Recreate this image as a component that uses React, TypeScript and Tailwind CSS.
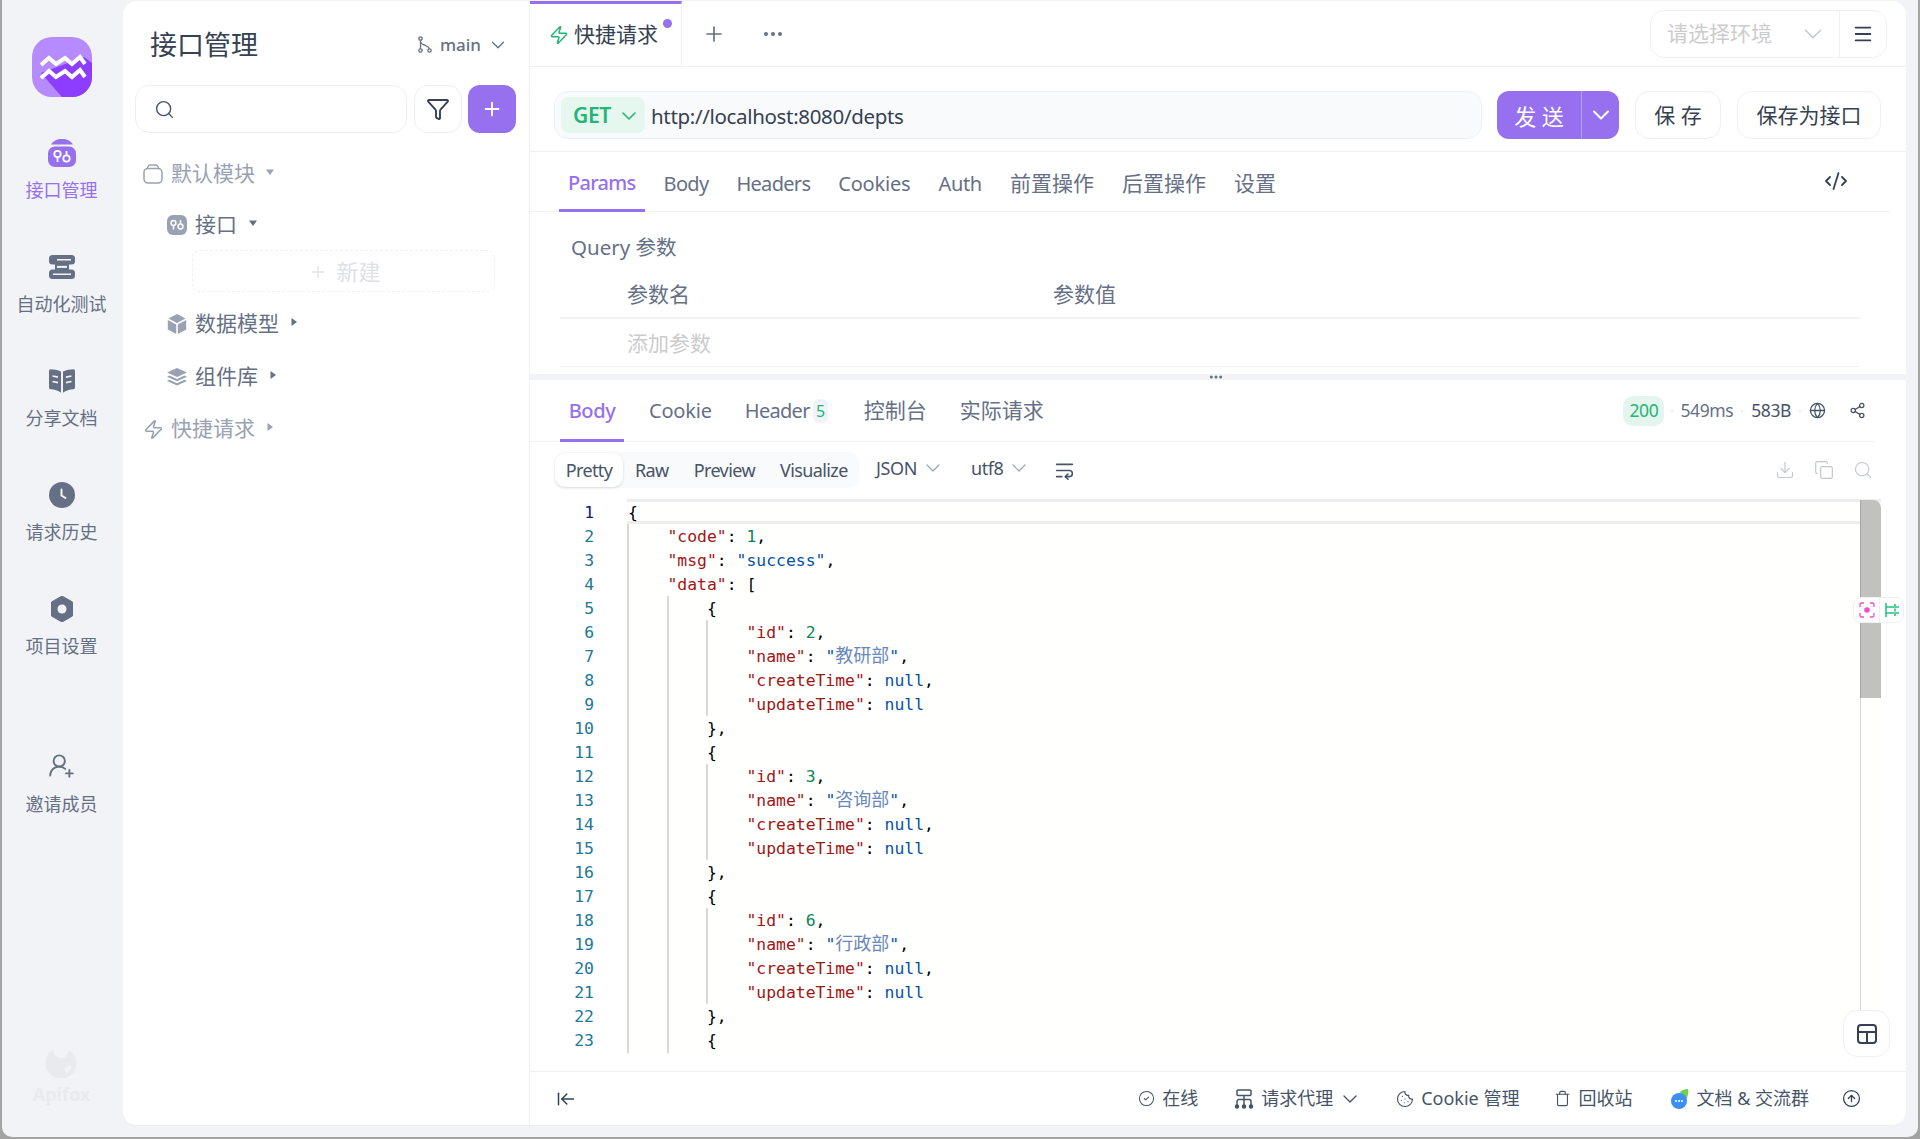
import React from 'react';
import {
  ArrowLeftToLine,
  ChevronDown,
  CircleArrowUp,
  CircleCheck,
  CodeXml,
  Copy,
  Cookie,
  Download,
  Ellipsis,
  Funnel,
  Globe,
  Menu,
  Plus,
  Search,
  Share2,
  Trash,
  UserRoundPlus,
  WrapText,
  Zap,
} from 'lucide-react';

const LogoMark = () => (
  <svg width="60" height="60" viewBox="0 0 60 60">
    <defs>
      <clipPath id="logoClip">
        <rect width="60" height="60" rx="20" />
      </clipPath>
    </defs>
    <g clipPath="url(#logoClip)">
      <rect width="60" height="60" fill="#b58bff" />
      <polygon points="9,36 52,20 60,26 60,60 30,60" fill="#8c3dff" />
    </g>
    <path d="M9 28l8-7 7 6 9-6 7 6 8-7 5 7" fill="none" stroke="#fff" strokeWidth="4" />
    <path d="M9 41l8-7 7 6 9-6 7 6 8-7 5 7" fill="none" stroke="#fff" strokeWidth="4" />
  </svg>
);

const ApiNavIcon = () => (
  <svg width="28" height="28" viewBox="0 0 28 28">
    <path d="M3 5.500C5 2 9 0 14 0s9 2 11 5.500z" fill="#9670ee" />
    <rect y="7.500" width="28" height="20.500" rx="7" fill="#9670ee" />
    <circle cx="9.500" cy="15" r="3.200" fill="none" stroke="#fff" strokeWidth="1.800" />
    <path d="M9.500 18v5M18.500 12v5" stroke="#fff" strokeWidth="1.800" />
    <circle cx="18.500" cy="19.500" r="3.200" fill="none" stroke="#fff" strokeWidth="1.800" />
  </svg>
);

const ServersIcon = () => (
  <svg width="26" height="24" viewBox="0 0 26 24">
    <rect width="26" height="9.500" rx="3.500" fill="#667085" />
    <rect y="14.500" width="26" height="9.500" rx="3.500" fill="#667085" />
    <rect x="6" y="8" width="14" height="8" fill="#667085" />
    <path d="M8 4.700h14M4 19.200h18" stroke="#f2f3f7" strokeWidth="1.600" />
    <path d="M8 11.900h10" stroke="#f2f3f7" strokeWidth="2" />
  </svg>
);

const BookIcon = () => (
  <svg width="26" height="24" viewBox="0 0 26 24">
    <path d="M12 2.500C9 1 4 .2 1.800.2 .7.2 0 1 0 2v16.500c0 1 .7 1.700 1.700 1.800 3.500.3 7.500 1.300 10.300 3.500z" fill="#667085" />
    <path d="M14 2.500C17 1 22 .2 24.200.2c1.100 0 1.800.8 1.800 1.800v16.500c0 1-.7 1.700-1.700 1.800-3.500.3-7.500 1.300-10.300 3.500z" fill="#667085" />
    <path d="M3.500 7l5.500 1.200M3.500 12.500L9 13.700M17 8.200L22.500 7M17 13.700l5.500-1.200" stroke="#f2f3f7" strokeWidth="1.700" />
  </svg>
);

const ClockIcon = () => (
  <svg width="26" height="26" viewBox="0 0 26 26">
    <circle cx="13" cy="13" r="13" fill="#667085" />
    <path d="M12.500 7.500v6l4 2.500" fill="none" stroke="#f2f3f7" strokeWidth="2" strokeLinecap="round" />
  </svg>
);

const HexIcon = () => (
  <svg width="24" height="26" viewBox="0 0 24 26">
    <path d="M12 0l10.500 6v14L12 26 1.500 20V6z" fill="#667085" stroke="#667085" strokeLinejoin="round" strokeWidth="1" />
    <circle cx="12" cy="13" r="4.500" fill="#f2f3f7" />
  </svg>
);

const ApifoxMark = () => (
  <svg width="32" height="30" viewBox="0 0 32 30">
    <circle cx="16" cy="15" r="15.500" fill="#e9eaee" />
    <path d="M8 0c0 6 3.500 10 8 10s8-4 8-10z" fill="#f2f3f7" />
    <path d="M22 25c-2-1-3-3-2-5 2 0 3-1 4-3 1 1 2 1 3 1-1 3-3 6-5 7z" fill="#f2f3f7" />
  </svg>
);

const TreeApiIcon = () => (
  <svg width="20" height="20" viewBox="0 0 20 20">
    <rect width="20" height="20" rx="6" fill="#98a2b3" />
    <circle cx="6.500" cy="8" r="2.400" fill="none" stroke="#fff" strokeWidth="1.500" />
    <path d="M6.500 10.500v4M13.500 5v4" stroke="#fff" strokeWidth="1.500" />
    <circle cx="13.500" cy="11.500" r="2.400" fill="none" stroke="#fff" strokeWidth="1.500" />
  </svg>
);

const FolderCan = () => (
  <svg width="20" height="20" viewBox="0 0 20 20" fill="none" stroke="#98a2b3" strokeWidth="1.500">
    <path d="M1 8.500C1 6 3 4.500 5 4.500h10c2 0 4 1.500 4 4V15c0 2.500-2 4-4 4H5c-2 0-4-1.500-4-4z" />
    <path d="M4.500 4.500C4.500 2.500 6 1 7.500 1h5c1.500 0 3 1.500 3 3.500" />
  </svg>
);

const CubeIcon = () => (
  <svg width="20" height="20" viewBox="0 0 20 20" fill="#98a2b3">
    <path d="M10 0l8.500 4.500L10 9 1.500 4.500z" />
    <path d="M.8 6l8.400 4.500V20L.8 15.500zM19.200 6l-8.400 4.500V20l8.400-4.500z" />
  </svg>
);

const LayersIcon = () => (
  <svg width="20" height="18" viewBox="0 0 20 18" fill="#98a2b3">
    <path d="M10 0l10 4.500L10 9 0 4.500z" />
    <path d="M2.500 7.500L10 11l7.500-3.500L20 8.700 10 13.300 0 8.700z" />
    <path d="M2.500 11.700L10 15.200l7.500-3.500L20 13 10 17.600 0 13z" />
  </svg>
);

const BranchIcon = () => (
  <svg width="14" height="17" viewBox="0 0 14 17" fill="none" stroke="#667085" strokeWidth="1.300">
    <circle cx="2.500" cy="2.500" r="1.700" />
    <circle cx="2.500" cy="14.500" r="1.700" />
    <circle cx="11.500" cy="14.500" r="1.700" />
    <path d="M2.500 4.200v8.600M2.500 6c1 2.500 3 2.500 5 3.500 2 1 3.500 2 4 3.300" />
  </svg>
);

const Caret = ({ open, color = '#667085' }: { open?: boolean; color?: string }) => (
  <svg width="8" height="8" viewBox="0 0 8 8" fill={color}>
    {open ? <path d="M0 1.500h8L4 7z" /> : <path d="M1.500 0v8L7 4z" />}
  </svg>
);

const ProxyIcon = () => (
  <svg width="20" height="20" viewBox="0 0 20 20" fill="none" stroke="#475467" strokeWidth="1.500">
    <rect x="3" y="1" width="14" height="5.500" rx="1" />
    <path d="M10 6.500V16M3 16v-3.500a2 2 0 012-2h10a2 2 0 012 2V16" />
    <circle cx="3" cy="17.500" r="1.500" fill="#475467" />
    <circle cx="10" cy="17.500" r="1.500" fill="#475467" />
    <circle cx="17" cy="17.500" r="1.500" fill="#475467" />
  </svg>
);

const ChatIcon = () => (
  <svg width="18" height="20" viewBox="0 0 18 20">
    <path d="M9 3c2-2 5-3 8-3 1 5-1 10-4 13z" fill="#6fd14b" />
    <circle cx="8" cy="12" r="8" fill="#3e8ef7" />
    <circle cx="5" cy="12" r="1" fill="#fff" />
    <circle cx="8" cy="12" r="1" fill="#fff" />
    <circle cx="11" cy="12" r="1" fill="#fff" />
  </svg>
);

const LayoutIcon = () => (
  <svg width="20" height="20" viewBox="0 0 20 20" fill="none" stroke="#344054" strokeWidth="2">
    <rect x="1" y="1" width="18" height="18" rx="3" />
    <path d="M1 8h18M10 8v11" />
  </svg>
);

const ScanIcon = () => (
  <svg width="16" height="16" viewBox="0 0 16 16" fill="none" stroke="#ee4fc8" strokeWidth="1.300">
    <path d="M1 5V2.500A1.500 1.500 0 012.500 1H5M11 1h2.500A1.500 1.500 0 0115 2.500V5M15 11v2.500a1.500 1.500 0 01-1.500 1.500H11M5 15H2.500A1.500 1.500 0 011 13.500V11" />
    <circle cx="8" cy="8" r="2.800" fill="#ee4fc8" stroke="none" />
  </svg>
);

const BarsIcon = () => (
  <svg width="14" height="16" viewBox="0 0 14 16" fill="none" stroke="#27c281" strokeWidth="1.600">
    <path d="M1 1v14M1 5h13M1 11h13M10 2v2M10 6.500v3M10 12v2" />
  </svg>
);

const NavItem = ({ icon, label, active }: { icon: React.ReactNode; label: string; active?: boolean }) => (
  <div className="flex flex-col items-center">
    <div className="flex h-[28px] items-center justify-center">{icon}</div>
    <div className={`mt-[11px] text-[18px] leading-[24px] ${active ? 'text-[#9670ee]' : 'text-[#667085]'}`}>{label}</div>
  </div>
);

const Sidebar = () => (
  <aside className="flex h-full w-[121px] shrink-0 flex-col items-center pb-[22px] pr-[2px] pt-[36px]">
    <LogoMark />
    <div className="mt-[42px] flex flex-col items-center gap-[51px]">
      <NavItem icon={<ApiNavIcon />} label="接口管理" active />
      <NavItem icon={<ServersIcon />} label="自动化测试" />
      <NavItem icon={<BookIcon />} label="分享文档" />
      <NavItem icon={<ClockIcon />} label="请求历史" />
      <NavItem icon={<HexIcon />} label="项目设置" />
    </div>
    <div className="mt-[93px] flex flex-col items-center">
      <div className="flex h-[28px] items-center justify-center">
        <UserRoundPlus size={27} strokeWidth={1.7} color="#667085" />
      </div>
      <div className="mt-[13px] text-[18px] leading-[24px] text-[#667085]">邀请成员</div>
    </div>
    <div className="mt-auto flex flex-col items-center">
      <ApifoxMark />
      <div className="mt-[6px] text-[18px] font-bold leading-[20px] text-[#e9eaee]">Apifox</div>
    </div>
  </aside>
);

const TreePanel = () => (
  <div className="flex h-full w-[407px] shrink-0 flex-col border-r border-[#f0f1f4]">
    <div className="flex h-[84px] shrink-0 items-center pl-[27px] pr-[20px] pt-[3px]">
      <div className="text-[27px] leading-[36px] text-[#364152]">接口管理</div>
      <div className="ml-auto flex items-center text-[17px] font-medium text-[#667085]">
        <BranchIcon />
        <span className="ml-[8px]">main</span>
        <ChevronDown size={22} className="ml-[6px]" strokeWidth={1.4} />
      </div>
    </div>
    <div className="flex items-center pl-[12px]">
      <div className="flex h-[48px] w-[272px] items-center rounded-[14px] border border-[#eceef2] pl-[18px]">
        <Search size={21} strokeWidth={1.6} color="#475467" />
      </div>
      <div className="ml-[7px] flex h-[48px] w-[48px] items-center justify-center rounded-[14px] border border-[#eceef2]">
        <Funnel size={24} strokeWidth={1.9} color="#364152" />
      </div>
      <div className="ml-[6px] flex h-[48px] w-[48px] items-center justify-center rounded-[12px] bg-[#9670ee]">
        <Plus size={22} color="#fff" strokeWidth={2} />
      </div>
    </div>

    <div className="mt-[21px] flex h-[40px] items-center pl-[20px] text-[21px] text-[#98a2b3]">
      <FolderCan />
      <span className="ml-[8px]">默认模块</span>
      <span className="ml-[11px] pb-[4px]"><Caret open color="#98a2b3" /></span>
    </div>
    <div className="mt-[11px] flex h-[40px] items-center pl-[44px] text-[21px] text-[#667085]">
      <TreeApiIcon />
      <span className="ml-[8px]">接口</span>
      <span className="ml-[12px] pb-[4px]"><Caret open /></span>
    </div>
    <div className="ml-[69px] mt-[5px] flex h-[42px] w-[303px] items-center justify-center rounded-[8px] border border-dashed border-[#eef0f5] pl-[3px] pt-[1px] text-[22px] text-[#dfe1e6]">
      <Plus size={18} strokeWidth={1.8} />
      <span className="ml-[9px]">新建</span>
    </div>
    <div className="mt-[12px] flex h-[40px] items-center pl-[44px] text-[21px] text-[#667085]">
      <CubeIcon />
      <span className="ml-[8px]">数据模型</span>
      <span className="ml-[11px] pb-[4px]"><Caret /></span>
    </div>
    <div className="mt-[13px] flex h-[40px] items-center pl-[44px] text-[21px] text-[#667085]">
      <LayersIcon />
      <span className="ml-[8px]">组件库</span>
      <span className="ml-[11px] pb-[4px]"><Caret /></span>
    </div>
    <div className="mt-[12px] flex h-[40px] items-center pl-[20px] text-[21px] text-[#98a2b3]">
      <Zap size={21} strokeWidth={1.8} />
      <span className="ml-[7px]">快捷请求</span>
      <span className="ml-[11px] pb-[4px]"><Caret color="#98a2b3" /></span>
    </div>
  </div>
);

const CjkTabs = ['前置操作', '后置操作', '设置'];

const CODE_LINES = [
  '{',
  '    "code": 1,',
  '    "msg": "success",',
  '    "data": [',
  '        {',
  '            "id": 2,',
  '            "name": "教研部",',
  '            "createTime": null,',
  '            "updateTime": null',
  '        },',
  '        {',
  '            "id": 3,',
  '            "name": "咨询部",',
  '            "createTime": null,',
  '            "updateTime": null',
  '        },',
  '        {',
  '            "id": 6,',
  '            "name": "行政部",',
  '            "createTime": null,',
  '            "updateTime": null',
  '        },',
  '        {',
];

const renderString = (text: string) =>
  text.split(/([\u4e00-\u9fff]+)/).map((part, i) =>
    /[\u4e00-\u9fff]/.test(part) ? (
      <span key={i} className="text-[18px] leading-[0] text-[#6a88b8] [font-family:'Noto_Sans_CJK_SC',sans-serif]">
        {part}
      </span>
    ) : (
      part
    ),
  );

const renderLine = (line: string) => {
  const out: React.ReactNode[] = [];
  const re = /("[^"]*")(:?)|(\b\d+\b)|(null)/g;
  let last = 0;
  let m: RegExpExecArray | null;
  while ((m = re.exec(line))) {
    if (m.index > last) out.push(line.slice(last, m.index));
    if (m[1] && m[2]) {
      out.push(<span key={m.index} className="text-[#a31515]">{m[1]}</span>);
      out.push(m[2]);
    } else if (m[1]) {
      out.push(<span key={m.index} className="text-[#0451a5]">{renderString(m[1])}</span>);
    } else if (m[3]) {
      out.push(<span key={m.index} className="text-[#098658]">{m[3]}</span>);
    } else {
      out.push(<span key={m.index} className="text-[#0451a5]">{m[4]}</span>);
    }
    last = m.index + m[0].length;
  }
  out.push(line.slice(last));
  return out;
};

const Editor = () => (
  <div className="flex h-[553px] shrink-0 [font-family:'DejaVu_Sans_Mono',monospace]">
    <div className="w-[64px] shrink-0 pt-[1px] text-right text-[16.4px] leading-[24px] text-[#237893]">
      {CODE_LINES.map((_, i) => (
        <div key={i} className={i === 0 ? 'text-[#0b216f]' : ''}>{i + 1}</div>
      ))}
    </div>
    <div className="relative ml-[33px] w-[1254px] whitespace-pre bg-[#fffffe] text-[16.4px] leading-[24px] text-black">
      <div className="absolute left-0 right-0 top-[-1px] h-[25px] border-y-[3px] border-[#eeeeee]" />
      <div className="absolute left-0 top-[24px] h-[529px] w-[2px] bg-[#d9d9d9]" />
      <div className="absolute left-[40px] top-[96px] h-[457px] w-[2px] bg-[#d9d9d9]" />
      <div className="absolute left-[79px] top-[120px] h-[96px] w-[2px] bg-[#d9d9d9]" />
      <div className="absolute left-[79px] top-[264px] h-[96px] w-[2px] bg-[#d9d9d9]" />
      <div className="absolute left-[79px] top-[408px] h-[96px] w-[2px] bg-[#d9d9d9]" />
      <div className="absolute right-0 top-0 h-[198px] w-[21px] rounded-tr-[8px] border-l border-[#a8a8a8] bg-[#c1c1bf]" />
      <div className="absolute bottom-[43px] right-[20px] top-[198px] w-px bg-[#d8d8d8]" />
      <div className="relative pl-px pt-[1px]">
        {CODE_LINES.map((line, i) => (
          <div key={i} className="h-[24px]">{renderLine(line)}</div>
        ))}
      </div>
    </div>
  </div>
);

const FooterItem = ({ icon, children }: { icon: React.ReactNode; children: React.ReactNode }) => (
  <div className="flex items-center text-[18px] text-[#475467]">
    {icon}
    <span className="ml-[7px]">{children}</span>
  </div>
);

const StatDot = ({ className }: { className: string }) => (
  <div className={`h-[2px] w-[2px] rounded-full bg-[#e4e7ec] ${className}`} />
);

const Main = () => (
  <div className="relative flex h-full min-w-0 flex-1 flex-col">
    {/* top tabs */}
    <div className="flex h-[66px] shrink-0 items-stretch border-b border-[#f0f1f4]">
      <div className="relative flex w-[152px] items-center border-r border-t-[3px] border-[#f0f1f4] border-t-[#9670ee] pl-[19px] text-[21px] text-[#364152]">
        <Zap size={20} strokeWidth={1.8} color="#22b573" />
        <span className="ml-[5px]">快捷请求</span>
        <div className="absolute right-[9px] top-[15px] h-[9px] w-[9px] rounded-full bg-[#9670ee]" />
      </div>
      <div className="ml-[20px] flex items-center">
        <Plus size={24} strokeWidth={1.7} color="#667085" />
      </div>
      <div className="ml-[35px] flex items-center">
        <Ellipsis size={24} strokeWidth={2} color="#667085" />
      </div>
      <div className="my-auto ml-auto mr-[19px] flex h-[48px] w-[237px] items-center rounded-[14px] border border-[#eef0f3]">
        <span className="ml-[16px] whitespace-nowrap pt-[1px] text-[21px] text-[#cccccc]">请选择环境</span>
        <ChevronDown size={30} color="#c4c7cc" strokeWidth={1.2} className="ml-[26px] shrink-0" />
        <div className="ml-auto flex h-full w-[47px] shrink-0 items-center justify-center border-l border-[#eef0f3]">
          <Menu size={22} color="#344054" strokeWidth={2} />
        </div>
      </div>
    </div>

    {/* url row */}
    <div className="flex h-[85px] shrink-0 items-start border-b border-[#f0f1f4] pl-[24px] pt-[24px]">
      <div className="flex h-[48px] w-[928px] items-center rounded-[14px] border border-[#eef0f3] bg-[#f9fafb] pl-[6px]">
        <div className="flex h-[36px] w-[84px] items-center rounded-[8px] bg-[#e6f7ef] pl-[12px] pt-[1px] text-[21px] font-semibold tracking-[-0.3px] text-[#22b573]">
          GET
          <ChevronDown size={24} className="ml-[6px] shrink-0" strokeWidth={1.6} />
        </div>
        <span className="ml-[6px] pt-[3px] text-[20.5px] tracking-[-0.33px] text-[#364152]">http://localhost:8080/depts</span>
      </div>
      <div className="ml-[15px] flex h-[48px] w-[122px] items-center rounded-[12px] bg-[#9670ee] text-[22px] text-white">
        <div className="flex h-full w-[85px] items-center justify-center border-r border-[#b9a3f4] pt-[2px]">发 送</div>
        <div className="flex flex-1 items-center justify-center"><ChevronDown size={28} strokeWidth={1.8} /></div>
      </div>
      <div className="ml-[16px] flex h-[48px] w-[86px] items-center justify-center rounded-[14px] border border-[#eef0f3] pt-[2px] text-[21px] text-[#364152]">保 存</div>
      <div className="ml-[16px] flex h-[48px] w-[144px] items-center justify-center rounded-[14px] border border-[#eef0f3] pt-[2px] text-[21px] text-[#364152]">保存为接口</div>
    </div>

    {/* request tabs */}
    <div className="mr-[16px] flex h-[60px] shrink-0 items-stretch gap-[10px] border-b border-[#f0f1f4] pl-[29px] pt-[1px] text-[20px] tracking-[-0.7px] text-[#667085]">
      <div className="mb-[-1px] flex items-center border-b-[3px] border-[#9670ee] px-[9px] pt-[4px] font-medium text-[#9670ee]">Params</div>
      <div className="flex items-center px-[9px] pt-[3px]">Body</div>
      <div className="flex items-center px-[9px] pt-[3px]">Headers</div>
      <div className="flex items-center px-[9px] pt-[3px] tracking-[-0.2px]">Cookies</div>
      <div className="flex items-center px-[9px] pt-[3px] tracking-[-0.3px]">Auth</div>
      <div className="flex gap-[10px]">
        {CjkTabs.map((t) => (
          <div key={t} className="flex items-center px-[9px] pt-[3px] text-[21px] tracking-normal">{t}</div>
        ))}
      </div>
      <div className="ml-auto mr-[42px] flex items-center pb-[3px]">
        <CodeXml size={24} strokeWidth={1.8} color="#344054" />
      </div>
    </div>

    {/* params */}
    <div className="h-[162px] shrink-0 pl-[30px] pr-[46px] text-[21px]">
      <div className="flex h-[72px] items-center pb-[1px] pl-[11px] text-[20.5px] text-[#667085]">Query 参数</div>
      <div className="flex h-[35px] items-center border-b-2 border-[#f2f3f7] pb-[11px] pl-[67px] text-[#667085]">
        <span className="w-[426px]">参数名</span>
        <span>参数值</span>
      </div>
      <div className="flex h-[48px] items-center border-b border-[#f0f1f4] pl-[67px] pt-[2px] text-[#cccccc]">添加参数</div>
    </div>

    {/* splitter */}
    <div className="relative h-[6px] shrink-0 bg-[#f2f3f7]">
      <Ellipsis size={16} color="#667085" strokeWidth={2.5} className="absolute left-[678px] top-[-5px]" />
    </div>

    {/* response tabs */}
    <div className="mr-[31px] flex h-[62px] shrink-0 items-stretch border-b border-[#f0f1f4] pl-[30px] text-[20px] tracking-[-0.4px] text-[#667085]">
      <div className="mb-[-1px] flex w-[64px] items-center justify-center border-b-[3px] border-[#9670ee] pt-[3px] font-medium text-[#9670ee]">Body</div>
      <div className="ml-[25px] flex items-center tracking-[-0.2px]">Cookie</div>
      <div className="ml-[33px] flex items-center tracking-[-0.7px]">
        Header
        <span className="ml-[3px] flex h-[24px] w-[15px] items-center justify-center rounded-[6px] bg-[#f2f3f7] text-[16px] text-[#22b573]">5</span>
      </div>
      <div className="ml-[36px] flex items-center text-[21px] tracking-normal">控制台</div>
      <div className="ml-[33px] flex items-center text-[21px] tracking-normal">实际请求</div>
      <div className="ml-auto flex items-center pr-[9px] text-[17.5px] tracking-[-0.4px]">
        <span className="flex h-[30px] w-[41px] items-center justify-center rounded-[10px] bg-[#e3f5ee] text-[#22b573]">200</span>
        <StatDot className="mx-[7px]" />
        <span>549ms</span>
        <StatDot className="mx-[8px]" />
        <span className="text-[#475467]">583B</span>
        <StatDot className="mx-[8px]" />
        <Globe size={17} strokeWidth={1.8} color="#475467" />
        <Share2 size={17} strokeWidth={1.8} color="#475467" className="ml-[23px]" />
      </div>
    </div>

    {/* response toolbar */}
    <div className="flex h-[58px] shrink-0 items-start pl-[25px] pt-[10px]">
      <div className="flex h-[36px] w-[304px] items-center rounded-[10px] bg-[#f9fafb] text-[18px] tracking-[-0.6px] text-[#475467]">
        <div className="flex h-[34px] w-[68px] items-center justify-center rounded-[10px] bg-white shadow-[0_1px_3px_rgba(16,24,40,0.15)]">Pretty</div>
        <span className="ml-[12px]">Raw</span>
        <span className="ml-[25px]">Preview</span>
        <span className="ml-[25px]">Visualize</span>
      </div>
      <div className="ml-[17px] flex h-[36px] items-center pb-[4px] text-[18px] tracking-[-0.4px] text-[#475467]">
        JSON
        <ChevronDown size={24} color="#98a2b3" strokeWidth={1.2} className="ml-[4px]" />
        <span className="ml-[26px]">utf8</span>
        <ChevronDown size={24} color="#98a2b3" strokeWidth={1.2} className="ml-[4px]" />
      </div>
      <div className="ml-[23px] flex h-[36px] items-center">
        <WrapText size={21} strokeWidth={1.8} color="#475467" />
      </div>
      <div className="ml-auto mr-[33px] flex h-[36px] items-center gap-[19px]">
        <Download size={20} strokeWidth={1.4} color="#c4c7cc" />
        <Copy size={20} strokeWidth={1.4} color="#c4c7cc" />
        <Search size={20} strokeWidth={1.4} color="#c4c7cc" />
      </div>
    </div>

    <Editor />

    {/* footer */}
    <div className="mt-auto flex h-[54px] shrink-0 items-center border-t border-[#f0f1f4] pl-[26px] pr-[45px]">
      <ArrowLeftToLine size={20} strokeWidth={1.8} color="#344054" />
      <div className="ml-auto flex items-center">
        <FooterItem icon={<CircleCheck size={17} strokeWidth={1.5} />}>在线</FooterItem>
        <div className="ml-[36px]">
          <FooterItem icon={<ProxyIcon />}>
            <span className="flex items-center">请求代理<ChevronDown size={24} strokeWidth={1.4} className="ml-[5px]" /></span>
          </FooterItem>
        </div>
        <div className="ml-[34px]"><FooterItem icon={<Cookie size={18} strokeWidth={1.5} />}>Cookie 管理</FooterItem></div>
        <div className="ml-[35px]"><FooterItem icon={<Trash size={17} strokeWidth={1.6} />}>回收站</FooterItem></div>
        <div className="ml-[39px]"><FooterItem icon={<ChatIcon />}>文档 &amp; 交流群</FooterItem></div>
        <div className="ml-[33px]"><CircleArrowUp size={19} strokeWidth={1.6} color="#344054" /></div>
      </div>
    </div>

    {/* floating tools */}
    <div className="absolute right-[2px] top-[596px] flex h-[26px] w-[51px] items-center rounded-[8px] border border-[#eef0f3] bg-white">
      <div className="flex h-full w-[26px] items-center justify-center border-r border-[#eef0f3]"><ScanIcon /></div>
      <div className="flex flex-1 items-center justify-center"><BarsIcon /></div>
    </div>
    <div className="absolute bottom-[68px] right-[16px] flex h-[47px] w-[47px] items-center justify-center rounded-[14px] border border-[#eef0f3] bg-white">
      <LayoutIcon />
    </div>
  </div>
);

export default function App() {
  return (
    <div className="h-[1139px] w-[1920px] overflow-hidden bg-[#a3a3a3] px-[2px] pb-[2px] text-[#667085] [font-family:'Noto_Sans','Noto_Sans_CJK_SC',sans-serif]">
      <div className="flex h-full rounded-b-[10px] bg-[#f2f3f7] pb-[11px] pr-[12px] pt-px">
        <Sidebar />
        <div className="flex h-full flex-1 overflow-hidden rounded-[14px] border-b border-[#eceef2] bg-white">
          <TreePanel />
          <Main />
        </div>
      </div>
    </div>
  );
}
